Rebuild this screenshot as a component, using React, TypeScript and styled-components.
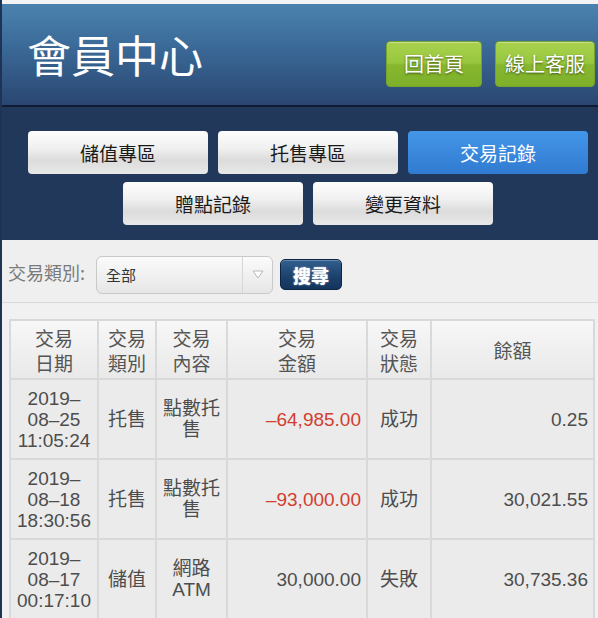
import React from "react";
import styled, { createGlobalStyle } from "styled-components";

const GlobalStyle = createGlobalStyle`
  html, body {
    margin: 0;
    padding: 0;
    background: #f1f1f1;
  }
  body {
    font-family: "Liberation Sans", "Noto Sans CJK TC", sans-serif;
    color: #4d4d4d;
  }
  * { box-sizing: border-box; }
`;

const Page = styled.div`
  width: 598px;
  border-left: 2px solid #1f3354;
  background: #f1f1f1;
  min-height: 618px;
`;

const TopStrip = styled.div`
  height: 4px;
  background: #f3f3f3;
`;

const Header = styled.header`
  height: 103px;
  background: linear-gradient(#4b83ae, #3a6896 45%, #2a4671);
  border-bottom: 2px solid #0e1b30;
  display: flex;
  align-items: flex-start;
  justify-content: space-between;
  padding: 0 3px 0 25px;
`;

const Title = styled.h1`
  margin: 22px 0 0;
  font-family: "Noto Sans CJK TC", sans-serif;
  font-weight: 400;
  font-size: 44px;
  line-height: 56px;
  color: #ffffff;
  letter-spacing: 0;
`;

const HeaderActions = styled.div`
  display: flex;
  gap: 13px;
  margin-top: 37px;
`;

const GreenButton = styled.button`
  min-width: 96px;
  height: 46px;
  padding: 0 9px;
  border: 1px solid #77a22c;
  border-radius: 4px;
  background: linear-gradient(#a8d24e, #98c63e 48%, #86b72f 52%, #7fb02a);
  color: #ffffff;
  font-family: "Noto Sans CJK TC", sans-serif;
  font-size: 20px;
  line-height: 1;
  text-shadow: 0 1px 2px rgba(40, 60, 10, 0.8);
  box-shadow: inset 0 1px 0 rgba(255, 255, 255, 0.35);
  cursor: pointer;
`;

const Nav = styled.nav`
  background: #22385a;
  padding: 24px 0 15px 16px;
  display: flex;
  flex-wrap: wrap;
  justify-content: center;
  column-gap: 10px;
  row-gap: 8px;
`;

const NavButton = styled.button<{ $active?: boolean }>`
  width: 180px;
  height: 43px;
  border: none;
  border-radius: 4px;
  font-family: "Noto Sans CJK TC", sans-serif;
  font-size: 19px;
  line-height: 1;
  cursor: pointer;
  color: ${(p) => (p.$active ? "#ffffff" : "#1a1a1a")};
  background: ${(p) =>
    p.$active
      ? "linear-gradient(#4396e8, #3a88dc 50%, #2f7bd1)"
      : "linear-gradient(#fdfdfd, #f0f0f0 40%, #dcdcdc 68%, #e8e8e8)"};
`;

const SearchBar = styled.div`
  height: 63px;
  background: #efefef;
  border-bottom: 1px solid #d9d9d9;
  display: flex;
  align-items: center;
  padding: 7px 0 0 6px;
`;

const Label = styled.span`
  font-family: "Noto Sans CJK TC", sans-serif;
  font-size: 18px;
  color: #7a7a7a;
  margin-right: 11px;
  margin-top: -6px;
`;

const Select = styled.div`
  width: 177px;
  height: 38px;
  border: 1px solid #c9c9c9;
  border-radius: 6px;
  background: linear-gradient(#fbfbfb, #e6e6e6);
  display: flex;
  align-items: stretch;
  margin-right: 7px;
`;

const SelectValue = styled.span`
  flex: 1;
  display: flex;
  align-items: center;
  padding-left: 9px;
  font-family: "Noto Sans CJK TC", sans-serif;
  font-size: 15px;
  color: #333333;
`;

const SelectArrow = styled.span`
  width: 30px;
  border-left: 1px solid #d6d6d6;
  display: flex;
  align-items: center;
  justify-content: center;
`;

const SearchButton = styled.button`
  width: 62px;
  height: 31px;
  border: 1px solid #0c2547;
  border-radius: 5px;
  background: linear-gradient(#33608f, #1d426d 55%, #14345c);
  color: #ffffff;
  font-family: "Noto Sans CJK TC", sans-serif;
  font-weight: 900;
  font-size: 18px;
  line-height: 1;
  text-shadow: 0 0 2px rgba(255, 255, 255, 0.6);
  box-shadow: inset 0 1px 0 rgba(255, 255, 255, 0.25);
  cursor: pointer;
`;

const Table = styled.table`
  margin: 16px 0 0 7px;
  width: 586px;
  table-layout: fixed;
  border-collapse: separate;
  border-spacing: 0;
  border-left: 2px solid #d9d9d9;
  border-top: 2px solid #d9d9d9;
`;

const HeadCell = styled.th`
  height: 59px;
  padding: 0;
  border-right: 2px solid #d9d9d9;
  border-bottom: 2px solid #d9d9d9;
  background: linear-gradient(#f7f7f7, #e9e9e9);
  font-family: "Noto Sans CJK TC", sans-serif;
  font-weight: 400;
  font-size: 19px;
  line-height: 25px;
  color: #555555;
  text-align: center;
  vertical-align: middle;
`;

const Cell = styled.td<{ $align?: "left" | "center" | "right"; $red?: boolean }>`
  height: 80px;
  padding: 0 ${(p) => (p.$align === "right" ? "5px" : "0")} 0 0;
  border-right: 2px solid #d9d9d9;
  border-bottom: 2px solid #d9d9d9;
  background: #ebebeb;
  font-size: 19px;
  line-height: 21px;
  color: ${(p) => (p.$red ? "#d43d2e" : "#4d4d4d")};
  text-align: ${(p) => p.$align ?? "center"};
  vertical-align: middle;
`;

const Lines = styled.span`
  display: block;
`;

type Row = {
  date: string[];
  type: string;
  content: string[];
  amount: string;
  negative: boolean;
  status: string;
  balance: string;
};

const rows: Row[] = [
  {
    date: ["2019–", "08–25", "11:05:24"],
    type: "托售",
    content: ["點數托", "售"],
    amount: "–64,985.00",
    negative: true,
    status: "成功",
    balance: "0.25",
  },
  {
    date: ["2019–", "08–18", "18:30:56"],
    type: "托售",
    content: ["點數托", "售"],
    amount: "–93,000.00",
    negative: true,
    status: "成功",
    balance: "30,021.55",
  },
  {
    date: ["2019–", "08–17", "00:17:10"],
    type: "儲值",
    content: ["網路", "ATM"],
    amount: "30,000.00",
    negative: false,
    status: "失敗",
    balance: "30,735.36",
  },
];

const colWidths = [88, 58, 71, 140, 64, 163];

const headers: string[][] = [
  ["交易", "日期"],
  ["交易", "類別"],
  ["交易", "內容"],
  ["交易", "金額"],
  ["交易", "狀態"],
  ["餘額"],
];

const renderLines = (parts: string[]) =>
  parts.map((p, i) => <Lines key={i}>{p}</Lines>);

export default function App() {
  return (
    <>
      <GlobalStyle />
      <Page>
        <TopStrip />
        <Header>
          <Title>會員中心</Title>
          <HeaderActions>
            <GreenButton>回首頁</GreenButton>
            <GreenButton>線上客服</GreenButton>
          </HeaderActions>
        </Header>
        <Nav>
          <NavButton>儲值專區</NavButton>
          <NavButton>托售專區</NavButton>
          <NavButton $active>交易記錄</NavButton>
          <NavButton>贈點記錄</NavButton>
          <NavButton>變更資料</NavButton>
        </Nav>
        <SearchBar>
          <Label>交易類別:</Label>
          <Select>
            <SelectValue>全部</SelectValue>
            <SelectArrow>
              <svg width="12" height="9" viewBox="0 0 12 9">
                <path d="M1 1 L11 1 L6 8 Z" fill="#ffffff" stroke="#b8b8b8" strokeWidth="1" strokeLinejoin="round" />
              </svg>
            </SelectArrow>
          </Select>
          <SearchButton>搜尋</SearchButton>
        </SearchBar>
        <Table>
          <colgroup>
            {colWidths.map((w, i) => (
              <col key={i} style={{ width: w }} />
            ))}
          </colgroup>
          <thead>
            <tr>
              {headers.map((h, i) => (
                <HeadCell key={i}>{renderLines(h)}</HeadCell>
              ))}
            </tr>
          </thead>
          <tbody>
            {rows.map((r, i) => (
              <tr key={i}>
                <Cell>{renderLines(r.date)}</Cell>
                <Cell>{r.type}</Cell>
                <Cell>{renderLines(r.content)}</Cell>
                <Cell $align="right" $red={r.negative}>
                  {r.amount}
                </Cell>
                <Cell>{r.status}</Cell>
                <Cell $align="right">{r.balance}</Cell>
              </tr>
            ))}
          </tbody>
        </Table>
      </Page>
    </>
  );
}
